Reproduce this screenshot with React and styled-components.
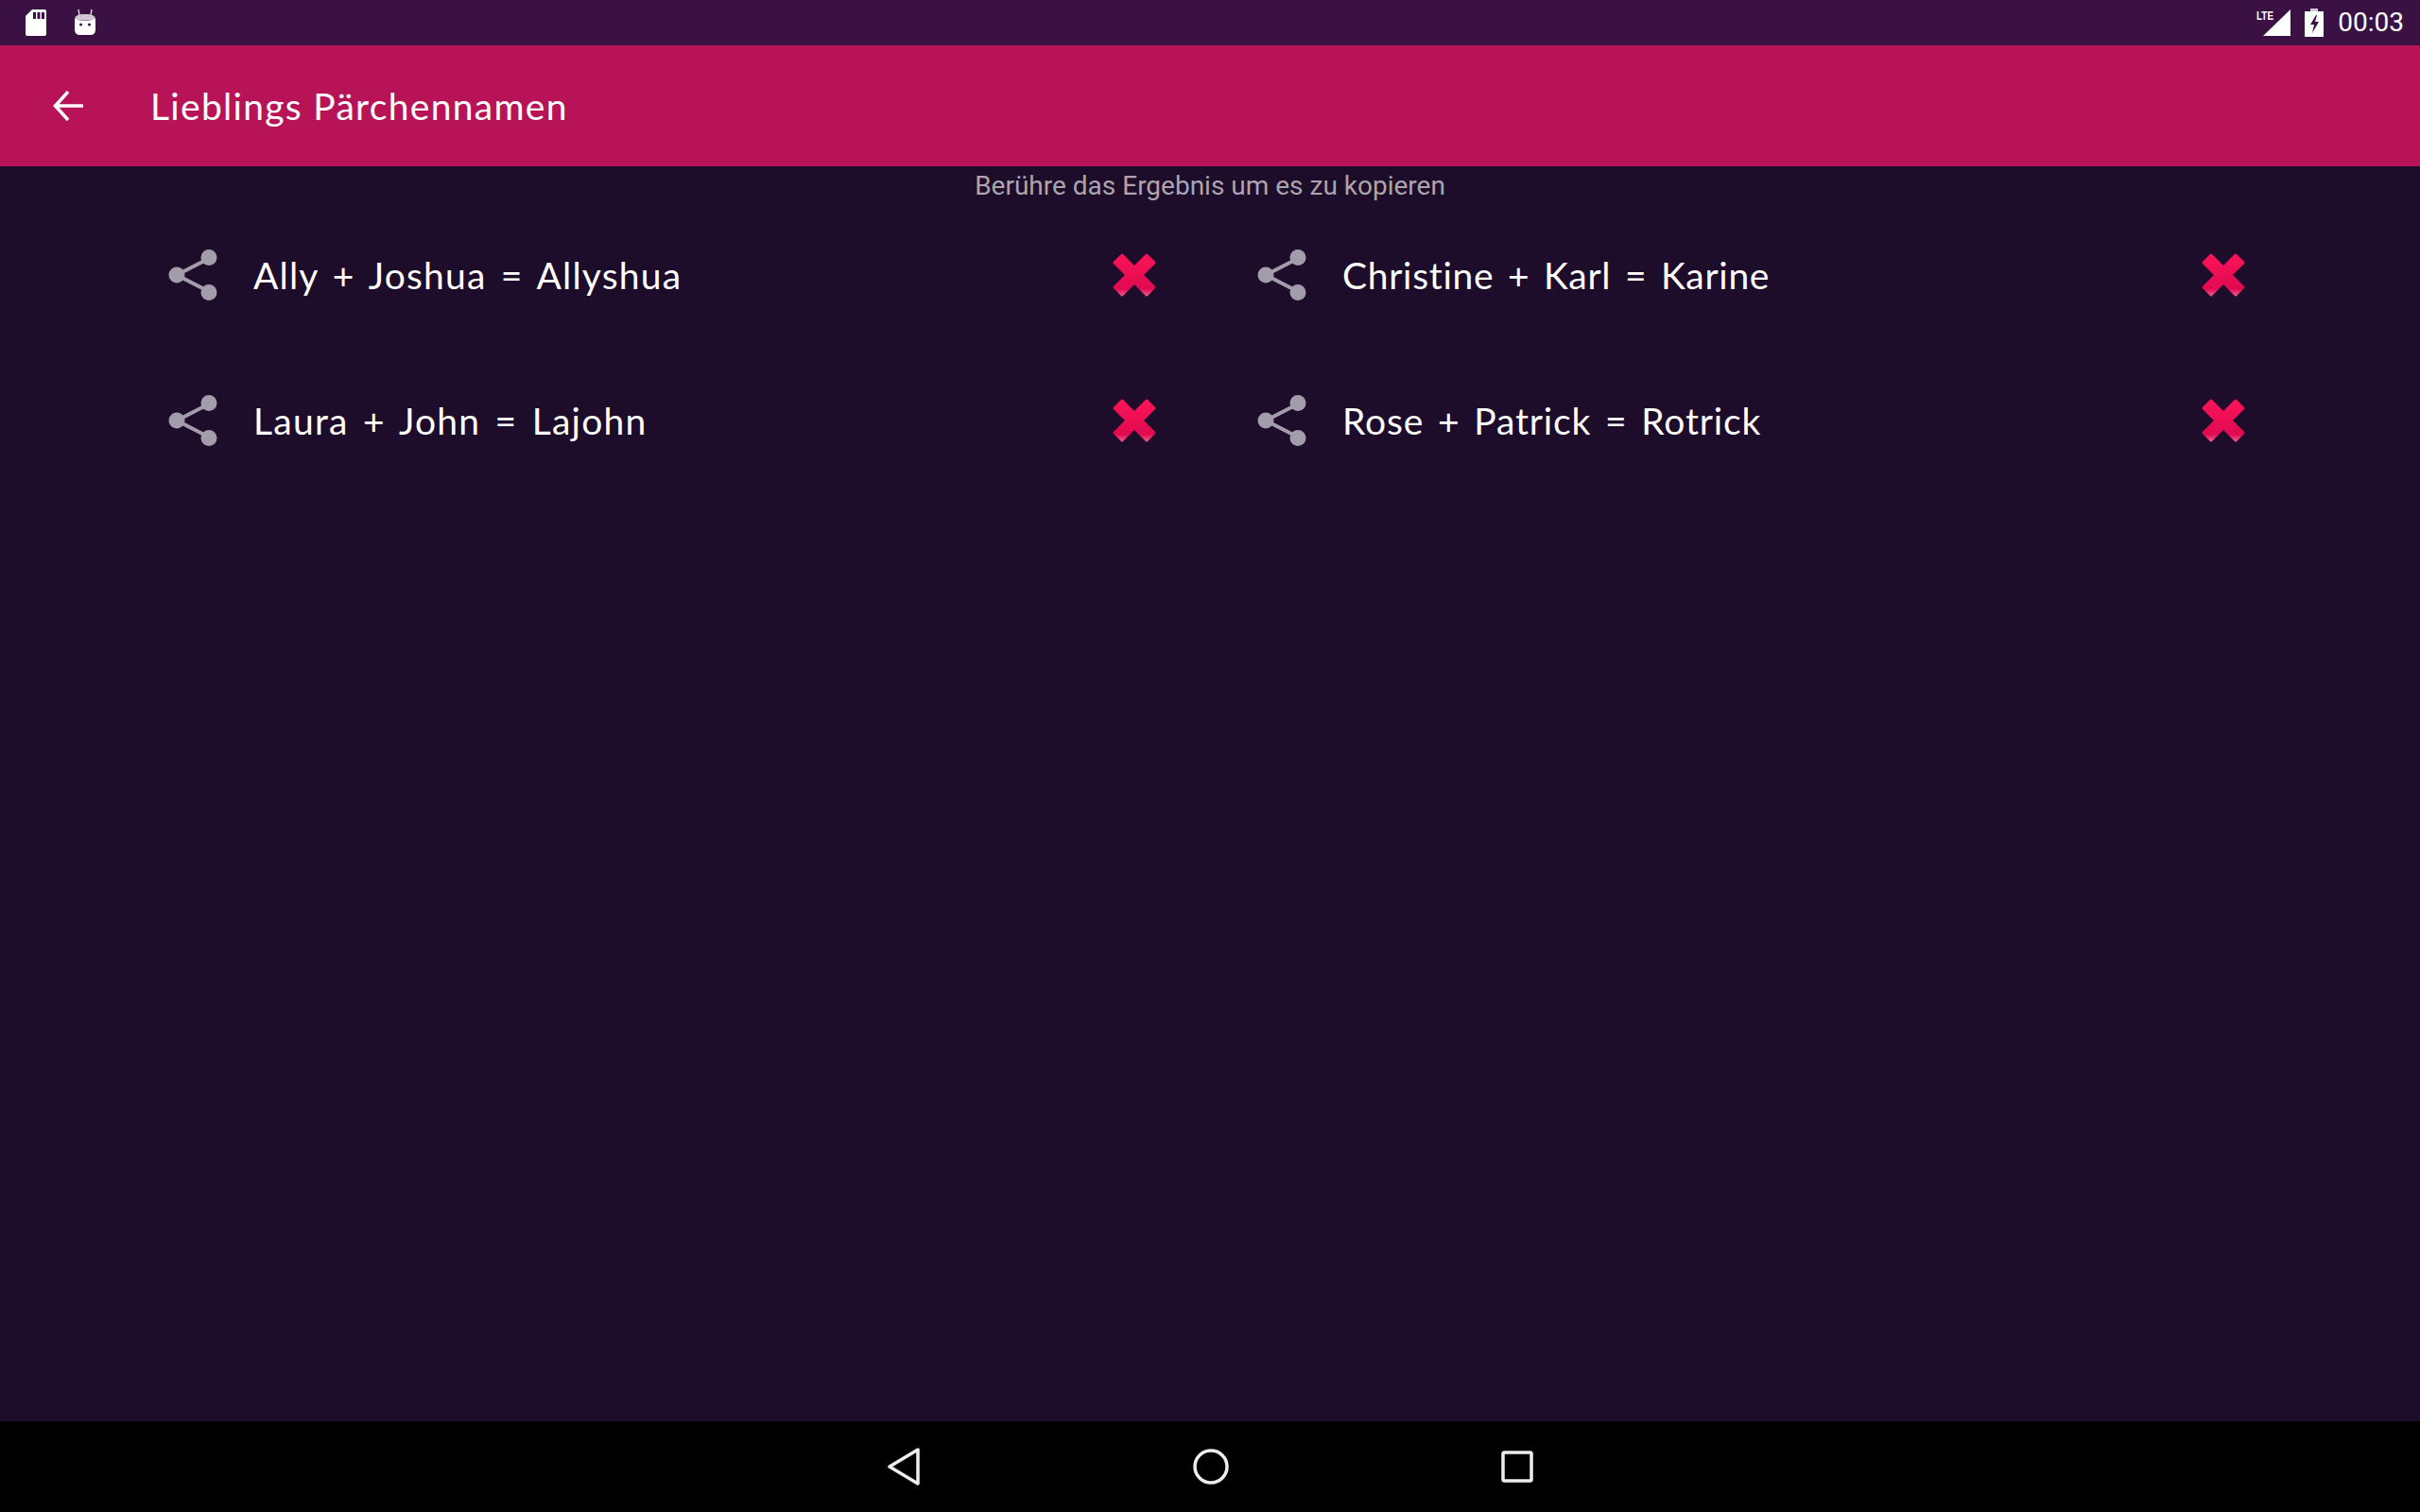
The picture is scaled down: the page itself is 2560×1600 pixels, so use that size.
import React from "react";
import styled, {createGlobalStyle} from "styled-components";

const GlobalStyle = createGlobalStyle`
    html, body {
        margin: 0;
        padding: 0;
        background: #1d0c2a;
    }
`;

const Screen = styled.div`
    display: flex;
    flex-direction: column;
    width: 2560px;
    height: 1600px;
    overflow: hidden;
    background: #1d0c2a;
`;

const StatusBar = styled.div`
    display: flex;
    align-items: center;
    justify-content: space-between;
    height: 48px;
    flex: none;
    padding: 0 17px 0 27px;
    box-sizing: border-box;
    background: #3a1142;
`;

const StatusGroup = styled.div`
    display: flex;
    align-items: center;
    gap: ${props => props.$gap}px;
`;

const Time = styled.span`
    font-family: Roboto, sans-serif;
    font-size: 28px;
    color: #fff;
    line-height: 50px;
`;

const AppBar = styled.header`
    display: flex;
    align-items: center;
    height: 128px;
    flex: none;
    padding-left: 56px;
    box-sizing: border-box;
    background: #b81356;
`;

const Title = styled.h1`
    margin: 0 0 0 71px;
    font-family: Lato, sans-serif;
    font-size: 39px;
    font-weight: 400;
    color: #fff;
    letter-spacing: 1.3px;
`;

const Hint = styled.div`
    height: 38px;
    flex: none;
    font-family: Roboto, sans-serif;
    font-size: 28px;
    line-height: 41px;
    text-align: center;
    color: #aaa5b0;
`;

const Grid = styled.div`
    display: grid;
    grid-template-columns: repeat(2, 1152px);
    grid-auto-rows: 154px;
    flex: 1;
    padding-left: 160px;
`;

const Row = styled.div`
    display: flex;
    align-items: center;
    padding-left: 18px;
    padding-right: 88px;
`;

const Names = styled.span`
    flex: 1;
    margin-left: 38px;
    font-family: Lato, sans-serif;
    font-size: 39px;
    color: #fff;
    letter-spacing: ${props => props.$tracking}px;
    word-spacing: 4px;
`;

const NavBar = styled.nav`
    display: flex;
    align-items: center;
    justify-content: center;
    gap: 288px;
    height: 96px;
    flex: none;
    background: #000;
`;

function SdIcon() {
    return (
        <svg width="22" height="28" viewBox="0 0 22 28">
            <path fill="#fff" d="M7 0h13a2 2 0 0 1 2 2v24a2 2 0 0 1-2 2H2a2 2 0 0 1-2-2V7z"/>
            <path fill="#3a1142" d="M8 3h3v7H8zM12.500 3h3v7h-3zM17 3h3v7h-3z"/>
        </svg>
    );
}

function RobotIcon() {
    return (
        <svg width="24" height="28" viewBox="0 0 24 28">
            <path stroke="#d8d0da" strokeWidth="1.500" d="M5 0l1 6M19 0l-1 6"/>
            <path fill="#cfc6d2" d="M1 11C1 6 5 5 12 5s11 1 11 6z"/>
            <path fill="#fff" fillRule="evenodd" d="M1 10c5 2 17 2 22 0v11c0 4-2 6-6 6H7c-4 0-6-2-6-6zM7.500 14.500a1.500 1.500 0 1 0 0 3 1.500 1.500 0 0 0 0-3zM16.500 14.500a1.500 1.500 0 1 0 0 3 1.500 1.500 0 0 0 0-3z"/>
        </svg>
    );
}

function SignalIcon() {
    return (
        <svg width="36" height="30" viewBox="0 0 36 30">
            <path fill="#fff" d="M36 1v28H7z"/>
            <path fill="#3a1142" d="M0 0h21v15H0z"/>
            <text x="0" y="12" fill="#fff" fontFamily="Liberation Sans Narrow, Liberation Sans, sans-serif" fontSize="13" fontWeight="700" textLength="18" lengthAdjust="spacingAndGlyphs">LTE</text>
        </svg>
    );
}

function BatteryIcon() {
    return (
        <svg width="20" height="30" viewBox="0 0 20 30">
            <path fill="#cfc8d2" d="M6 0h8v3H6z"/>
            <path fill="#fff" fillRule="evenodd" d="M0 3h20v27H0zM12 7l-6 10h4l-2 9 7-12h-4l2-7z"/>
        </svg>
    );
}

function BackArrow() {
    return (
        <svg width="32" height="32" viewBox="0 0 32 32">
            <path fill="none" stroke="#fff" strokeWidth="3.500" d="M32 16H3M16 1L2.500 16 16 31"/>
        </svg>
    );
}

function ShareIcon() {
    return (
        <svg width="52" height="54" viewBox="0 0 52 54">
            <path fill="none" stroke="#a39dab" strokeWidth="4" d="M43 9.500L9 27l34 17.500"/>
            <circle cx="9" cy="27" r="8.500" fill="#a39dab"/>
            <circle cx="43" cy="8.500" r="8.500" fill="#a39dab"/>
            <circle cx="43" cy="45.500" r="8.500" fill="#a39dab"/>
        </svg>
    );
}

function CrossIcon() {
    return (
        <svg width="48" height="48" viewBox="0 0 48 48">
            <defs>
                <linearGradient id="crossFill" x1="0" y1="0" x2="0" y2="1">
                    <stop offset="0" stopColor="#fb1458"/>
                    <stop offset="0.85" stopColor="#e00a50"/>
                    <stop offset="1" stopColor="#f0507f"/>
                </linearGradient>
            </defs>
            <path
                fill="url(#crossFill)"
                stroke="url(#crossFill)"
                strokeWidth="3"
                strokeLinejoin="round"
                d="M3 11L11 3 24 16 37 3 45 11 32 24 45 37 37 45 24 32 11 45 3 37 16 24z"
            />
        </svg>
    );
}

// tracking is set per couple so each line keeps its width from the reference
const couples = [
    {names: "Ally + Joshua = Allyshua", tracking: 1.2},
    {names: "Christine + Karl = Karine", tracking: 0.7},
    {names: "Laura + John = Lajohn", tracking: 1.25},
    {names: "Rose + Patrick = Rotrick", tracking: 0.85},
];

export default function App() {
    return (
        <Screen>
            <GlobalStyle/>
            <StatusBar>
                <StatusGroup $gap={29}>
                    <SdIcon/>
                    <RobotIcon/>
                </StatusGroup>
                <StatusGroup $gap={15}>
                    <SignalIcon/>
                    <BatteryIcon/>
                    <Time>00:03</Time>
                </StatusGroup>
            </StatusBar>
            <AppBar>
                <BackArrow/>
                <Title>Lieblings Pärchennamen</Title>
            </AppBar>
            <Hint>Berühre das Ergebnis um es zu kopieren</Hint>
            <Grid>
                {couples.map(couple => (
                    <Row key={couple.names}>
                        <ShareIcon/>
                        <Names $tracking={couple.tracking}>{couple.names}</Names>
                        <CrossIcon/>
                    </Row>
                ))}
            </Grid>
            <NavBar>
                <svg width="36" height="40" viewBox="0 0 36 40">
                    <path fill="none" stroke="#eee" strokeWidth="3.500" strokeLinejoin="round" d="M33 2v36L3 20z"/>
                </svg>
                <svg width="38" height="38" viewBox="0 0 38 38">
                    <circle cx="19" cy="19" r="17" fill="none" stroke="#eee" strokeWidth="3.500"/>
                </svg>
                <svg width="34" height="34" viewBox="0 0 34 34">
                    <rect x="2" y="2" width="30" height="30" rx="1.500" fill="none" stroke="#eee" strokeWidth="3.500"/>
                </svg>
            </NavBar>
        </Screen>
    );
}
